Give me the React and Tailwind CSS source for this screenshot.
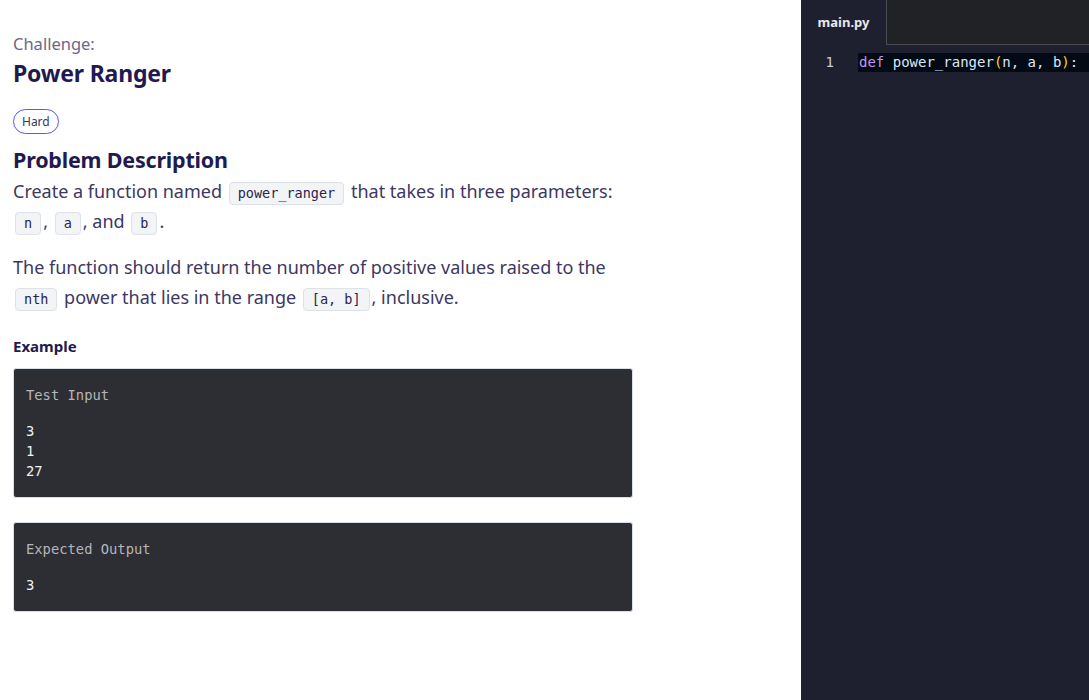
const sans = { fontFamily: "'Noto Sans', 'Open Sans', sans-serif" };

function Chip({ children }) {
  return (
    <code className="mx-[2px] inline-block rounded-[4px] border border-[#dde1e8] bg-[#f3f4f6] px-[8px] align-middle font-['DejaVu_Sans_Mono',monospace] text-[13.5px] leading-[21px] text-[#2a2550]">
      {children}
    </code>
  );
}

function SampleBox({ title, lines }) {
  return (
    <div className="w-[620px] rounded-[3px] border border-[#d8dee8] bg-[#2d2e33] px-[12px] pt-[16px] pb-[16px] font-['DejaVu_Sans_Mono',monospace] text-[13.8px] leading-[20px]">
      <div className="text-[#b4b5ba]">{title}</div>
      <div className="mt-[16px] text-[#f2f2f2]">
        {lines.map((l, i) => (
          <div key={i}>{l}</div>
        ))}
      </div>
    </div>
  );
}

export default function App() {
  return (
    <div className="flex h-[700px] w-full overflow-hidden bg-white" style={sans}>
      {/* problem statement */}
      <div className="w-[801px] shrink-0 pl-[13px] pt-[34px]">
        <div className="text-[16.5px] leading-[20px] text-[#6d6787]">Challenge:</div>
        <h1 className="mt-[3px] text-[23px] font-bold leading-[32px] tracking-[-0.2px] text-[#221a4f]">Power Ranger</h1>
        <span className="mt-[20px] inline-block rounded-full border border-[#5a58ee] px-[8px] text-[12px] leading-[23px] text-[#3a3460]">
          Hard
        </span>
        <h2 className="mt-[11px] text-[21.5px] font-bold leading-[30px] tracking-[-0.2px] text-[#221a4f]">Problem Description</h2>
        <p className="mt-[1px] text-[18px] leading-[30px] text-[#3d3763]">
          Create a function named <Chip>power_ranger</Chip> that takes in three parameters:
          <br />
          <Chip>n</Chip>, <Chip>a</Chip>, and <Chip>b</Chip>.
        </p>
        <p className="mt-[16px] text-[18px] leading-[30px] text-[#3d3763]">
          The function should return the number of positive values raised to the
          <br />
          <Chip>nth</Chip> power that lies in the range <Chip>[a, b]</Chip>, inclusive.
        </p>
        <h3 className="mt-[24px] text-[15px] font-bold leading-[20px] text-[#221a4f]">Example</h3>
        <div className="mt-[12px]">
          <SampleBox title="Test Input" lines={["3", "1", "27"]} />
        </div>
        <div className="mt-[24px]">
          <SampleBox title="Expected Output" lines={["3"]} />
        </div>
      </div>

      {/* editor */}
      <div className="flex flex-1 flex-col bg-[#1e2030]">
        <div className="flex h-[45px]">
          <div className="flex w-[85px] items-center justify-center text-[13px] font-bold text-[#e8e8ee]">main.py</div>
          <div className="flex-1 border-b border-l border-[#4b4c53] bg-[#212226]" />
        </div>
        <div className="mt-[8px] flex h-[19px] items-center font-['DejaVu_Sans_Mono',monospace] text-[14px]">
          <div className="w-[57px] pr-[24px] text-right text-[#c8ccd6]">1</div>
          <div className="h-full flex-1 whitespace-nowrap bg-[#020b15] pl-[1px] leading-[19px] text-[#dce6f2]">
            <span className="text-[#c792ea]">def</span> power_ranger<span className="text-[#ffd700]">(</span>n, a, b<span className="text-[#ffd700]">)</span>:
          </div>
        </div>
      </div>
    </div>
  );
}
